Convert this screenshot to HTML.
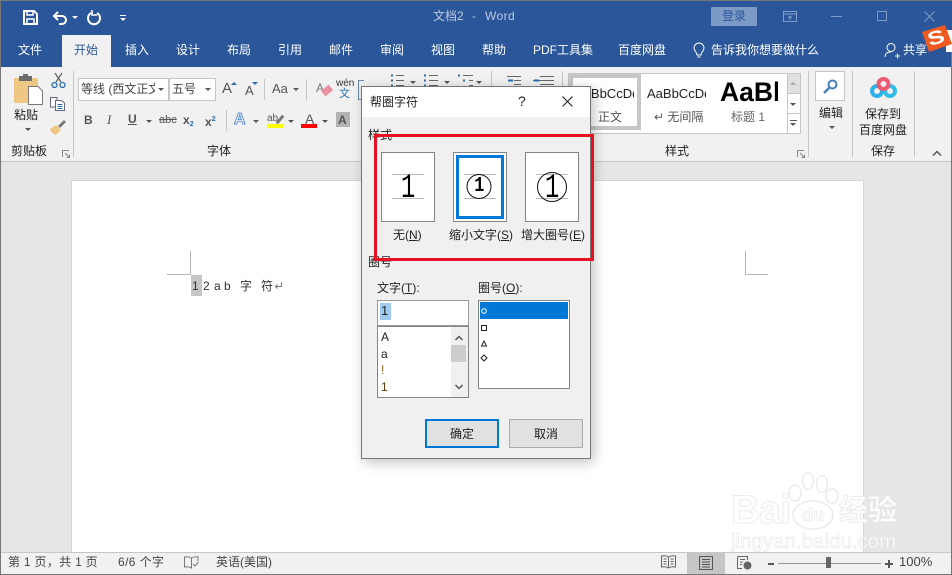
<!DOCTYPE html>
<html><head><meta charset="utf-8"><style>
html,body{margin:0;padding:0;width:952px;height:575px;overflow:hidden;background:#e6e6e6}
body{position:relative;font-family:"Liberation Sans","Noto Sans CJK SC",sans-serif;font-size:12px;color:#444}
.a{position:absolute;box-sizing:border-box}
.t{position:absolute;white-space:nowrap;line-height:16px;height:16px}
.w{color:#fff}
.d{color:#222}
.tri{position:absolute;width:0;height:0;border-left:3px solid transparent;border-right:3px solid transparent;border-top:3px solid #555}
.sep{position:absolute;width:1px;background:#c6c6c6}
svg{position:absolute;overflow:visible}
u{text-decoration:underline}
.one{font-family:"Liberation Mono",monospace;color:#000}
</style></head><body>
<!-- title bar -->
<div class="a" style="left:0;top:0;width:952px;height:67px;background:#2b579a;border-top:1px solid #777"></div>
<svg style="left:23px;top:10px" width="15" height="15" fill="none" stroke="#fff" stroke-width="2"><path d="M1 1H11L14 4V14H1Z"/><path d="M4 1V5H10V1M4 14V9H11V14" stroke-width="1.5"/></svg>
<svg style="left:52px;top:10px" width="16" height="15" fill="none" stroke="#fff" stroke-width="2"><path d="M2 6H10A4 4 0 0 1 10 14H7"/><path d="M6 2L2 6L6 10"/></svg>
<div class="tri" style="left:72px;top:16px;border-top-color:#fff"></div>
<svg style="left:87px;top:10px" width="14" height="15" fill="none" stroke="#fff" stroke-width="2"><path d="M4 3A6 6 0 1 0 10 3"/><path d="M9 0V5H14" stroke-width="1.6" transform="translate(-4 0)"/></svg>
<div class="a" style="left:120px;top:15px;width:6px;height:1px;background:#fff"></div>
<div class="tri" style="left:120px;top:18px;border-top-color:#fff"></div>
<div class="t" style="left:433px;top:8px;color:#bcc9df">文档2</div>
<div class="t" style="left:472px;top:8px;color:#bcc9df">-</div>
<div class="t" style="left:485px;top:8px;color:#bcc9df;letter-spacing:.4px">Word</div>
<div class="a" style="left:711px;top:7px;width:46px;height:19px;background:#7c9ac6;border-radius:1px"></div>
<div class="t" style="left:722px;top:8px;color:#2b579a">登录</div>
<svg style="left:783px;top:11px" width="14" height="11" fill="none" stroke="#7f9cc8"><path d="M.5 .5H13.5V10.5H.5ZM.5 3H13.5M7 9V5M5 7L7 5L9 7"/></svg>
<div class="a" style="left:831px;top:16px;width:11px;height:1px;background:#7f9cc8"></div>
<div class="a" style="left:877px;top:11px;width:10px;height:10px;border:1px solid #7f9cc8"></div>
<svg style="left:924px;top:11px" width="11" height="11" stroke="#7f9cc8"><path d="M.5 .5L10.5 10.5M10.5 .5L.5 10.5"/></svg>
<!-- tabs -->
<div class="a" style="left:62px;top:35px;width:49px;height:32px;background:#f1f1f1"></div>
<div class="t w" style="left:18px;top:42px">文件</div>
<div class="t" style="left:74px;top:42px;color:#2b579a">开始</div>
<div class="t w" style="left:125px;top:42px">插入</div>
<div class="t w" style="left:176px;top:42px">设计</div>
<div class="t w" style="left:227px;top:42px">布局</div>
<div class="t w" style="left:278px;top:42px">引用</div>
<div class="t w" style="left:329px;top:42px">邮件</div>
<div class="t w" style="left:380px;top:42px">审阅</div>
<div class="t w" style="left:431px;top:42px">视图</div>
<div class="t w" style="left:482px;top:42px">帮助</div>
<div class="t w" style="left:533px;top:42px">PDF工具集</div>
<div class="t w" style="left:618px;top:42px">百度网盘</div>
<svg style="left:693px;top:43px" width="13" height="17" fill="none" stroke="#fff"><path d="M4 12C4 9 1 8 1 5A5 5 0 0 1 11 5C11 8 8 9 8 12ZM4.500 14H7.500"/></svg>
<div class="t w" style="left:711px;top:42px">告诉我你想要做什么</div>
<svg style="left:884px;top:42px" width="17" height="17" fill="none" stroke="#fff"><circle cx="7" cy="5.500" r="4"/><path d="M1 15C1 11 4 10 7 10M11 14H16M13.500 11.500V16.500"/></svg>
<div class="t w" style="left:903px;top:42px">共享</div>
<div class="a" style="left:946px;top:30px;width:6px;height:22px;background:#fff"></div>
<svg style="left:922px;top:25px" width="30" height="27"><polygon points="0,7 23,0 30,19 7,27" fill="#ef5a22"/></svg>
<div class="t" style="left:930px;top:27px;font-size:19px;line-height:24px;height:24px;font-weight:bold;color:#fff;transform:rotate(-16deg) scaleX(1.35)">S</div>
<!-- ribbon -->
<div class="a" style="left:0;top:67px;width:952px;height:95px;background:#f1f1f1;border-bottom:1px solid #c6c6c6"></div>
<!-- clipboard -->
<div class="a" style="left:14px;top:78px;width:24px;height:25px;background:#eec785;border-radius:1px"></div>
<div class="a" style="left:19px;top:76px;width:13px;height:5px;background:#6d6d6d"></div>
<div class="a" style="left:23px;top:74px;width:5px;height:3px;background:#6d6d6d"></div>
<svg style="left:28px;top:86px" width="15" height="19"><path d="M.5 .5H10L14.500 5V18.500H.5Z" fill="#fff" stroke="#777"/></svg>
<div class="t d" style="left:14px;top:107px">粘贴</div>
<div class="tri" style="left:25px;top:128px"></div>
<svg style="left:51px;top:73px" width="15" height="16" fill="none" stroke="#666"><path d="M4 0L10 9M11 0L5 9" stroke-width="1.300"/><circle cx="3.500" cy="12" r="2.500" stroke="#2b6cb0" stroke-width="1.300"/><circle cx="11.500" cy="12" r="2.500" stroke="#2b6cb0" stroke-width="1.300"/></svg>
<svg style="left:50px;top:97px" width="15" height="14" fill="#fff" stroke="#667"><path d="M.5 .5H7V10H.5Z"/><path d="M5.500 3.500H11L14.500 6V13.500H5.500Z"/><path d="M7.500 7.500H12.500M7.500 9.500H12.500M7.500 11.500H12.500" stroke="#2b6cb0"/></svg>
<svg style="left:50px;top:120px" width="16" height="15"><path d="M0 9L6 5L11 10L6 15C3 14 1 12 0 9Z" fill="#eec785"/><path d="M8 6L14 0L16 2L10 8Z" fill="#777"/></svg>
<div class="t d" style="left:11px;top:143px">剪贴板</div>
<svg style="left:62px;top:150px" width="8" height="8" fill="none" stroke="#888"><path d="M.5 7V.5H7M3 3L7.500 7.500M4.500 7.500H7.500V4.500"/></svg>
<div class="sep" style="left:73px;top:71px;height:86px"></div>
<!-- font -->
<div class="a" style="left:78px;top:78px;width:91px;height:23px;background:#fff;border:1px solid #c6c6c6"></div>
<div class="a" style="left:169px;top:78px;width:47px;height:23px;background:#fff;border:1px solid #c6c6c6"></div>
<div class="t" style="left:81px;top:81px;width:74px;overflow:hidden;color:#444">等线 (西文正文)</div>
<div class="tri" style="left:158px;top:88px"></div>
<div class="t" style="left:172px;top:81px;color:#444">五号</div>
<div class="tri" style="left:205px;top:88px"></div>
<div class="t" style="left:222px;top:81px;font-size:15px;color:#555">A</div>
<div class="tri" style="left:231px;top:82px;border-top:0;border-bottom:3px solid #2b6cb0"></div>
<div class="t" style="left:245px;top:83px;font-size:13px;color:#555">A</div>
<div class="tri" style="left:252px;top:82px;border-top-color:#2b6cb0"></div>
<div class="sep" style="left:264px;top:79px;height:21px"></div>
<div class="t" style="left:272px;top:81px;font-size:13px;color:#555">Aa</div>
<div class="tri" style="left:293px;top:88px"></div>
<div class="sep" style="left:306px;top:79px;height:21px"></div>
<div class="t" style="left:316px;top:80px;font-size:12px;color:#777">A</div>
<div class="a" style="left:322px;top:87px;width:10px;height:7px;background:#ec8fa0;transform:rotate(-40deg)"></div>
<div class="t" style="left:336px;top:78px;font-size:10px;line-height:12px;height:12px;color:#333">wén</div>
<div class="t" style="left:339px;top:88px;font-size:11px;line-height:12px;height:12px;color:#2b6cb0">文</div>
<div class="a" style="left:358px;top:80px;width:6px;height:20px;border:1px solid #6c87b0;border-right:0"></div>
<div class="t" style="left:84px;top:112px;font-weight:bold;color:#555">B</div>
<div class="t" style="left:107px;top:112px;font-style:italic;font-family:'Liberation Serif',serif;font-size:13px;color:#555">I</div>
<div class="t" style="left:128px;top:111px;font-weight:bold;color:#555;text-decoration:underline">U</div>
<div class="tri" style="left:146px;top:120px"></div>
<div class="t" style="left:159px;top:112px;font-size:11px;color:#555;text-decoration:line-through">abc</div>
<div class="t" style="left:183px;top:112px;font-weight:bold;color:#555">x<span style="font-size:7px;color:#2b6cb0;vertical-align:-2px">2</span></div>
<div class="t" style="left:205px;top:112px;font-weight:bold;color:#555">x<span style="font-size:7px;color:#2b6cb0;vertical-align:5px">2</span></div>
<div class="sep" style="left:226px;top:110px;height:21px"></div>
<div class="t" style="left:234px;top:112px;font-size:16px;font-weight:bold;color:#fff;-webkit-text-stroke:1px #5b8fd0">A</div>
<div class="tri" style="left:253px;top:120px"></div>
<div class="t" style="left:267px;top:111px;font-size:10px;color:#555">ab</div>
<div class="a" style="left:275px;top:118px;width:10px;height:3px;background:#777;transform:rotate(-50deg)"></div>
<div class="a" style="left:267px;top:124px;width:16px;height:4px;background:#ff0"></div>
<div class="tri" style="left:288px;top:120px"></div>
<div class="t" style="left:305px;top:111px;font-size:14px;color:#555">A</div>
<div class="a" style="left:301px;top:124px;width:16px;height:4px;background:#f00"></div>
<div class="tri" style="left:322px;top:120px"></div>
<div class="a" style="left:336px;top:112px;width:14px;height:15px;background:#b3b3b3"></div>
<div class="t" style="left:338px;top:112px;font-weight:bold;color:#555">A</div>
<div class="t d" style="left:207px;top:143px">字体</div>
<!-- paragraph -->
<svg style="left:390px;top:73px" width="170" height="16" fill="none" stroke="#666"><path d="M6 2.500H14M6 7.500H14M6 12.500H14M39 2.500H48M39 7.500H48M39 12.500H48M73 2.500H83M79 7.500H83M79 12.500H83M117 3.500H131M124 7.500H131M124 11.500H131M117 14.500H131M150 3.500H164M143 7.500H164M150 11.500H164"/><path d="M1 2.500H3M1 7.500H3M1 12.500H3M34 2.500H36M34 7.500H36M34 12.500H36M68 2.500H70M73 7.500H75M77 14.500H79M118 7.500H123M144 7.500H149" stroke="#2b6cb0" stroke-width="2"/></svg>
<div class="tri" style="left:410px;top:81px"></div>
<div class="tri" style="left:444px;top:81px"></div>
<div class="tri" style="left:476px;top:81px"></div>
<div class="sep" style="left:491px;top:71px;height:20px"></div>
<div class="sep" style="left:562px;top:71px;height:86px"></div>
<!-- styles gallery -->
<div class="a" style="left:568px;top:73px;width:233px;height:61px;background:#fff;border:1px solid #c6c6c6"></div>
<div class="a" style="left:569px;top:74px;width:72px;height:56px;background:#fff;border:4px solid #c6c6c6"></div>
<div class="t" style="left:575px;top:86px;color:#222;width:59px;overflow:hidden;font-size:13px">AaBbCcDd</div>
<div class="t" style="left:598px;top:109px;color:#555">正文</div>
<div class="t" style="left:647px;top:86px;color:#222;width:59px;overflow:hidden;font-size:13px">AaBbCcDd</div>
<div class="t" style="left:654px;top:109px;color:#555">↵ 无间隔</div>
<div class="t" style="left:720px;top:77px;font-size:26.500px;line-height:30px;height:30px;font-weight:bold;color:#000;width:58px;overflow:hidden">AaBbCc</div>
<div class="t" style="left:731px;top:109px;color:#666">标题 1</div>
<div class="a" style="left:787px;top:74px;width:13px;height:20px;background:#e0e0e0;border-bottom:1px solid #c6c6c6"></div>
<div class="tri" style="left:790px;top:82px;border-top:0;border-bottom:3px solid #aaa"></div>
<div class="a" style="left:787px;top:113px;width:13px;height:1px;background:#c6c6c6"></div>
<div class="a" style="left:787px;top:74px;width:1px;height:59px;background:#c6c6c6"></div>
<div class="tri" style="left:790px;top:103px"></div>
<div class="a" style="left:790px;top:120px;width:7px;height:1px;background:#555"></div>
<div class="tri" style="left:790px;top:123px"></div>
<div class="t d" style="left:665px;top:143px">样式</div>
<svg style="left:797px;top:150px" width="8" height="8" fill="none" stroke="#888"><path d="M.5 7V.5H7M3 3L7.500 7.500M4.500 7.500H7.500V4.500"/></svg>
<div class="sep" style="left:808px;top:71px;height:86px"></div>
<div class="a" style="left:815px;top:71px;width:30px;height:30px;background:#fff;border:1px solid #c6c6c6"></div>
<svg style="left:823px;top:79px" width="15" height="15" fill="none" stroke="#4a7db8" stroke-width="2"><circle cx="9.500" cy="5.500" r="4"/><path d="M6 9L1 14" stroke-width="2.500"/></svg>
<div class="t d" style="left:819px;top:105px">编辑</div>
<div class="tri" style="left:829px;top:126px"></div>
<div class="sep" style="left:852px;top:71px;height:86px"></div>
<svg style="left:870px;top:77px" width="27" height="22" fill="none" stroke-width="4"><circle cx="7" cy="14" r="5" stroke="#2fb0ea"/><circle cx="20" cy="14" r="5" stroke="#33bde6"/><circle cx="13.500" cy="7" r="5" stroke="#ef5a70"/></svg>
<div class="t d" style="left:865px;top:106px">保存到</div>
<div class="t d" style="left:859px;top:122px">百度网盘</div>
<div class="t d" style="left:871px;top:143px">保存</div>
<div class="sep" style="left:914px;top:71px;height:86px"></div>
<svg style="left:932px;top:150px" width="10" height="6" fill="none" stroke="#555" stroke-width="1.500"><path d="M1 5.500L5 1.500L9 5.500"/></svg>
<!-- document -->
<div class="a" style="left:71px;top:180px;width:793px;height:373px;background:#fff;border:1px solid #d6d6d6;border-bottom:0"></div>
<div class="a" style="left:190px;top:251px;width:1px;height:24px;background:#b5b5b5"></div>
<div class="a" style="left:167px;top:274px;width:23px;height:1px;background:#b5b5b5"></div>
<div class="a" style="left:745px;top:251px;width:1px;height:24px;background:#b5b5b5"></div>
<div class="a" style="left:745px;top:274px;width:23px;height:1px;background:#b5b5b5"></div>
<div class="a" style="left:191px;top:275px;width:11px;height:21px;background:#c6c6c6"></div>
<div class="t" style="left:192px;top:278px;color:#333">1</div>
<div class="t" style="left:203px;top:278px;color:#333">2</div>
<div class="t" style="left:214px;top:278px;color:#333">a</div>
<div class="t" style="left:224px;top:278px;color:#333">b</div>
<div class="t" style="left:240px;top:278px;color:#333">字</div>
<div class="t" style="left:261px;top:278px;color:#333">符</div>
<svg style="left:274px;top:282px" width="9" height="8" fill="none" stroke="#777"><path d="M7.500 .5V4.500H1.500M3.500 2.500L1.500 4.500L3.500 6.500"/></svg>
<!-- watermark -->
<div class="t" style="left:731px;top:490px;font-size:40px;line-height:40px;height:40px;font-weight:bold;color:#fff;-webkit-text-stroke:1px #ebebeb;letter-spacing:-1px">Bai</div>
<svg style="left:788px;top:472px" width="50" height="60" fill="#fff" stroke="#ebebeb" stroke-width="1.500"><ellipse cx="25" cy="43" rx="20" ry="14"/><ellipse cx="7" cy="21" rx="6" ry="8"/><ellipse cx="20" cy="9" rx="5.500" ry="8.500"/><ellipse cx="34" cy="12" rx="5.500" ry="8.500"/><ellipse cx="44" cy="24" rx="6" ry="7"/></svg>
<div class="t" style="left:802px;top:505px;font-size:18px;line-height:20px;height:20px;font-weight:bold;color:#fff;-webkit-text-stroke:.7px #e8e8e8">du</div>
<div class="t" style="left:839px;top:495px;font-size:29px;line-height:32px;height:32px;font-weight:bold;color:#fff;-webkit-text-stroke:1px #ebebeb">经验</div>
<div class="t" style="left:731px;top:530px;font-size:20.500px;line-height:24px;height:24px;color:#fff;-webkit-text-stroke:.7px #e8e8e8">jingyan.baidu.com</div>
<!-- status bar -->
<div class="a" style="left:0;top:552px;width:952px;height:23px;background:#f1f1f1;border-top:1px solid #c6c6c6;border-bottom:1px solid #777"></div>
<div class="t" style="left:8px;top:554px;letter-spacing:.3px">第 1 页，共 1 页</div>
<div class="t" style="left:118px;top:554px;letter-spacing:.4px">6/6 个字</div>
<svg style="left:184px;top:556px" width="15" height="13" fill="none" stroke="#777"><path d="M7.500 2C6 1 3 .5 .5 1V11C3 10.500 6 11 7.500 12V2C9 1 12 .5 14 1V5M9 8L11 10L14.500 6"/></svg>
<div class="t" style="left:216px;top:554px">英语(美国)</div>
<svg style="left:661px;top:555px" width="15" height="14" fill="none" stroke="#666"><path d="M7.500 2C6 1 3 .5 .5 1V12C3 11.500 6 12 7.500 13C9 12 12 11.500 14.500 12V1C12 .5 9 1 7.500 2V13M2.500 4H5.500M2.500 6.500H5.500M2.500 9H5.500M9.500 4H12.500M9.500 6.500H12.500M9.500 9H12.500"/></svg>
<div class="a" style="left:687px;top:553px;width:38px;height:21px;background:#c6c6c6"></div>
<svg style="left:699px;top:556px" width="14" height="14" fill="none" stroke="#555"><path d="M.5 .5H13.500V13.500H.5ZM3 3.500H11M3 6H11M3 8.500H11M3 11H11"/></svg>
<svg style="left:737px;top:556px" width="15" height="14" fill="none" stroke="#666"><path d="M.5 .5H10.500V4M.5 .5V12.500H5M3 3.500H8M3 6H6M3 8.500H5"/><circle cx="10.500" cy="9.500" r="3.500" fill="#666"/></svg>
<div class="a" style="left:768px;top:563px;width:6px;height:2px;background:#555"></div>
<div class="a" style="left:778px;top:563px;width:103px;height:1px;background:#999"></div>
<div class="a" style="left:826px;top:557px;width:5px;height:11px;background:#666"></div>
<div class="a" style="left:885px;top:563px;width:8px;height:2px;background:#555"></div>
<div class="a" style="left:888px;top:560px;width:2px;height:8px;background:#555"></div>
<div class="t" style="left:899px;top:554px;font-size:13px">100%</div>
<div class="a" style="left:0;top:0;width:1px;height:575px;background:#777"></div>
<div class="a" style="left:951px;top:52px;width:1px;height:523px;background:#777"></div>
<!-- dialog -->
<div class="a" style="left:361px;top:86px;width:230px;height:373px;background:#f0f0f0;border:1px solid #777;box-shadow:3px 3px 12px rgba(0,0,0,.25)"></div>
<div class="a" style="left:362px;top:87px;width:228px;height:30px;background:#fff"></div>
<div class="t" style="left:370px;top:94px;color:#222">帮圈字符</div>
<div class="t" style="left:518px;top:93px;font-size:14px;color:#222">?</div>
<svg style="left:562px;top:96px" width="11" height="11" stroke="#222" stroke-width="1.100"><path d="M.5 .5L10.500 10.500M10.500 .5L.5 10.500"/></svg>
<div class="t d" style="left:368px;top:127px">样式</div>
<!-- option boxes -->
<div class="a" style="left:381px;top:152px;width:54px;height:70px;background:#fff;border:1px solid #858585"></div>
<div class="a" style="left:453px;top:152px;width:54px;height:70px;background:#fff;border:1px solid #858585"></div>
<div class="a" style="left:456px;top:155px;width:48px;height:64px;border:3px solid #0078d7"></div>
<div class="a" style="left:525px;top:152px;width:54px;height:70px;background:#fff;border:1px solid #858585"></div>
<svg style="left:381px;top:152px" width="198" height="70" fill="none"><path d="M11 22.500H43M11 46.500H43M83 22.500H115M83 46.500H115M155 22.500H187M155 46.500H187" stroke="#bbb"/>
<circle cx="98" cy="34.500" r="12" stroke="#111"/><circle cx="171" cy="35" r="14.500" stroke="#111"/></svg>
<div class="t one" style="left:398px;top:172px;font-size:34px;line-height:34px;height:34px;transform:scaleX(.7)">1</div>
<div class="t one" style="left:473px;top:177px;font-size:21px;line-height:20px;height:20px;font-weight:bold;transform:scaleX(.8)">1</div>
<div class="t one" style="left:542px;top:172px;font-size:34px;line-height:34px;height:34px;transform:scaleX(.7)">1</div>
<div class="t d" style="left:393px;top:227px">无(<u>N</u>)</div>
<div class="t d" style="left:449px;top:227px">缩小文字(<u>S</u>)</div>
<div class="t d" style="left:521px;top:227px">增大圈号(<u>E</u>)</div>
<div class="t d" style="left:368px;top:254px">圈号</div>
<div class="t d" style="left:377px;top:280px">文字(<u>T</u>):</div>
<div class="t d" style="left:478px;top:280px">圈号(<u>O</u>):</div>
<div class="a" style="left:377px;top:300px;width:92px;height:26px;background:#fff;border:1px solid #999"></div>
<div class="a" style="left:380px;top:303px;width:11px;height:17px;background:#9fccee"></div>
<div class="t" style="left:381px;top:303px;font-size:13px;color:#222">1</div>
<div class="a" style="left:377px;top:326px;width:92px;height:72px;background:#fff;border:1px solid #858585"></div>
<div class="a" style="left:451px;top:327px;width:17px;height:70px;background:#f0f0f0"></div>
<div class="a" style="left:451px;top:345px;width:15px;height:17px;background:#cdcdcd"></div>
<svg style="left:454px;top:335px" width="10" height="55" fill="none" stroke="#555" stroke-width="1.500"><path d="M1.500 5L5 1.500L8.500 5M1.500 50L5 53.500L8.500 50"/></svg>
<div class="t d" style="left:381px;top:329px">A</div>
<div class="t d" style="left:381px;top:346px">a</div>
<div class="t" style="left:381px;top:362px;color:#8a5a10">!</div>
<div class="t" style="left:381px;top:379px;color:#5a3a08">1</div>
<div class="a" style="left:478px;top:300px;width:92px;height:89px;background:#fff;border:1px solid #858585"></div>
<div class="a" style="left:480px;top:302px;width:88px;height:17px;background:#0078d7"></div>
<svg style="left:480px;top:306px" width="10" height="60" fill="none" stroke="#222"><circle cx="4" cy="5" r="2.300" stroke="#fff"/><path d="M1.500 19.500H6.500V24.500H1.500ZM4 35L6.500 40H1.500ZM4 49L7 52L4 55L1 52Z"/></svg>
<div class="a" style="left:425px;top:419px;width:74px;height:29px;background:#e1e1e1;border:2px solid #0078d7"></div>
<div class="t d" style="left:450px;top:426px">确定</div>
<div class="a" style="left:509px;top:419px;width:74px;height:29px;background:#e1e1e1;border:1px solid #adadad"></div>
<div class="t d" style="left:534px;top:426px">取消</div>
<!-- red highlight -->
<div class="a" style="left:374px;top:134px;width:220px;height:127px;border:3px solid #e81123"></div>
</body></html>
